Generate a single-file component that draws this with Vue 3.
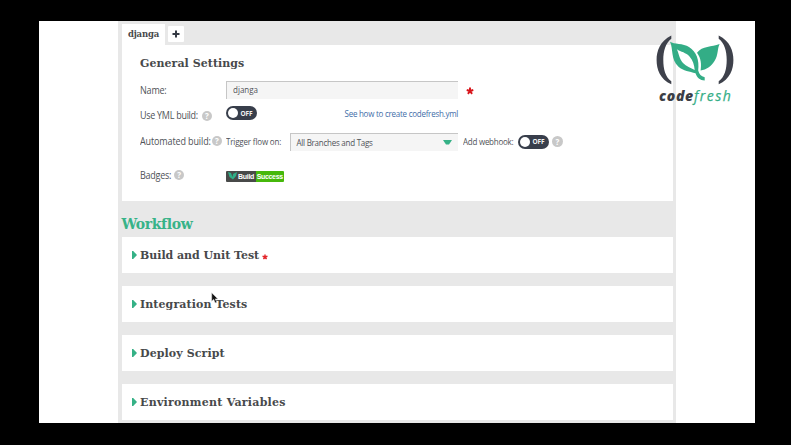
<script setup>
import { h } from 'vue'

const stages = [
  { title: 'Build and Unit Test', required: true },
  { title: 'Integration Tests' },
  { title: 'Deploy Script' },
  { title: 'Environment Variables', wide: true },
]

const Help = () => h('span', { class: 'help' }, '?')
const Toggle = () => h('span', { class: 'toggle' }, [h('i'), h('b', 'OFF')])
</script>

<template>
  <div class="frame">
    <div class="screen">
      <main class="panel">
        <nav class="tabs">
          <div class="tab slab">djanga</div>
          <button class="add" aria-label="Add">
            <svg width="8" height="8" viewBox="0 0 8 8"><path d="M4 .5v7M.5 4h7" stroke="#343a44" stroke-width="2" /></svg>
          </button>
        </nav>

        <section class="card">
          <h2 class="slab">General Settings</h2>
          <div class="row name-row">
            <div class="label"><span class="t-name">Name:</span></div>
            <div class="input"><span class="tall">djanga</span></div>
            <svg class="star big" viewBox="0 0 10 10"><path d="M5 5V.7M5 5L.9 3.8M5 5l4.1-1.2M5 5L2.4 8.6M5 5l2.6 3.6" /></svg>
          </div>
          <div class="row yml-row">
            <div class="label"><span class="t-yml">Use YML build:</span><Help /></div>
            <Toggle />
            <a class="link tall">See how to create codefresh.yml</a>
          </div>
          <div class="row auto-row">
            <div class="label"><span class="t-auto">Automated build:</span><Help /></div>
            <span class="trigger tall">Trigger flow on:</span>
            <div class="select">
              <span class="tall">All Branches and Tags</span>
              <svg width="9" height="5" viewBox="0 0 9 5"><path d="M0 0h9L6 4.400H3z" fill="#35b186" /></svg>
            </div>
            <span class="webhook tall">Add webhook:</span>
            <Toggle />
            <Help />
          </div>
          <div class="row badge-row">
            <div class="label"><span class="t-badges">Badges:</span><Help /></div>
            <div class="badge">
              <span class="build">
                <svg width="9" height="8" viewBox="0 0 9 8"><path d="M0 0l3 1 1.500 4L5 2l4-2-1 4-3 3.500L1.500 5z" fill="#2fae87" /></svg>
                <span>Build</span>
              </span>
              <span class="success">Success</span>
            </div>
          </div>
        </section>

        <h1 class="slab">Workflow</h1>
        <section v-for="s in stages" :key="s.title" class="stage">
          <svg class="caret" width="5" height="8" viewBox="0 0 5 8"><path d="M0 0l1.200 0L5 4 1.200 8H0z" fill="#35b186" /></svg>
          <h3 class="slab" :class="{ wide: s.wide, tight: s.required }">{{ s.title }}</h3>
          <svg v-if="s.required" class="star" viewBox="0 0 10 10"><path d="M5 5V.7M5 5L.9 3.8M5 5l4.1-1.2M5 5L2.4 8.6M5 5l2.6 3.6" /></svg>
        </section>
      </main>

      <div class="logo">
        <svg width="78" height="50" viewBox="0 0 78 50">
          <path d="M15.300 .5C4 6 .6 16 .6 25S4 44.500 15.300 49.300V46.300C9.300 42 7.300 34 7.300 25S9.500 8 15.300 3.700z" fill="#3e414b" />
          <path d="M62.700 .5C74 6 77.400 16 77.400 25S74 44.500 62.700 49.300V46.300C68.700 42 70.700 34 70.700 25S68.500 8 62.700 3.700z" fill="#3e414b" />
          <path fill-rule="evenodd" d="M14 6.800C18 9.500 27 8.200 33 12C40.500 16.800 43.500 25 42.200 35.500C43.200 39.300 45 41.300 48.700 42.300V45.500C44 45.300 41 42.500 39.500 38.200C33.500 36.500 27.500 36 22.500 31.700C14.500 24.500 17.500 14 14 6.800zM20.800 14.300C23 18.500 23 23.500 27 28C30.300 31.700 34.800 33 38.700 34.900C38.200 30 37 25.500 33.500 21.500C30 17.500 25 17 20.800 14.300z" fill="#33ad86" />
          <path d="M63.600 9C61.300 13 62.500 20 58.500 26C55 31.500 50.500 34.500 44.600 35.600C45.500 29.500 45.200 23.500 41 17.800C46.500 10.500 55.500 12.300 63.600 9z" fill="#33ad86" />
        </svg>
        <div class="wordmark"><b>code</b><span>fresh</span></div>
      </div>

      <svg class="cursor" width="8" height="12" viewBox="0 0 8 12"><path d="M.7.8v8.400l2-1.800 1.500 3.500 1.600-.7-1.500-3.300h2.600z" fill="#111" stroke="#ddd" stroke-width=".6" /></svg>
    </div>
  </div>
</template>

<style>
body { background: #000; overflow: hidden; }
</style>

<style scoped>
* { box-sizing: border-box; }
.frame {
  width: 791px;
  height: 445px;
  padding: 21px 36px 22px 39px;
  background: #000;
  font-family: "Open Sans", "Noto Sans", sans-serif;
  color: #505358;
}
.screen {
  position: relative;
  height: 402px;
  overflow: hidden;
  background: #fff;
}
.panel {
  width: 558px;
  height: 402px;
  margin-left: 79px;
  padding: 3px 3px 0 3.500px;
  background: #e8e8e8;
}
h1, h2, h3 { margin: 0; }
.slab {
  font-family: "DejaVu Serif", serif;
  font-weight: 700;
  white-space: nowrap;
  color: #47494b;
}
.tabs { display: flex; height: 21px; }
.tab {
  width: 43px;
  padding-left: 6.500px;
  background: #fff;
  font-size: 8.500px;
  line-height: 21px;
  letter-spacing: -.2px;
}
.add {
  display: grid;
  place-items: center;
  width: 16px;
  height: 16px;
  margin: 2px 0 0 3.500px;
  padding: 0;
  border: 0;
  border-radius: 1px;
  background: #fff;
}
.card {
  height: 156px;
  padding: 8px 0 0 18.500px;
  background: #fff;
}
.card h2 { height: 20px; font-size: 11px; line-height: 22px; letter-spacing: .05px; }
.row { display: flex; align-items: center; white-space: nowrap; font-size: 8px; }
.label { display: flex; align-items: center; width: 86px; flex: none; font-size: 9px; }
.label > span:first-child { transform: scaleY(1.1); }
.tall { display: inline-block; transform: scaleY(1.13); }
.name-row { height: 18px; margin-top: 8px; }
.yml-row { height: 16px; margin-top: 8px; }
.auto-row { height: 18px; margin-top: 9px; }
.badge-row { height: 14px; margin-top: 18px; }
.t-name { letter-spacing: -.2px; }
.t-yml { letter-spacing: -.28px; }
.t-auto { letter-spacing: -.12px; }
.t-badges { letter-spacing: -.25px; }
.yml-row .label { padding-top: 1px; }
.input, .select {
  height: 18px;
  border-top: 1px solid #c6c6c6;
  border-left: 1px solid #c6c6c6;
  background: #f5f5f5;
}
.input { width: 232px; padding-left: 6px; line-height: 16px; }
.star { width: 6px; height: 6px; margin: 3px 0 0 3px; stroke: #e3262b; stroke-width: 2.400; fill: none; }
.star.big { width: 8px; height: 8px; margin: 1px 0 0 8px; stroke: #d8151b; }
:deep(.help) {
  display: block;
  flex: none;
  width: 10px;
  height: 10px;
  margin-left: 4px;
  border-radius: 50%;
  background: #c8c8c8;
  color: #fff;
  font-size: 8px;
  font-weight: 700;
  line-height: 10px;
  text-align: center;
}
.badge-row :deep(.help) { margin-left: 3px; }
:deep(.toggle) {
  display: flex;
  align-items: center;
  flex: none;
  width: 31px;
  height: 14px;
  margin-top: -4px;
  padding-left: 2px;
  border-radius: 7px;
  background: #383e4b;
  color: #f2f2f2;
}
:deep(.toggle i) { width: 10px; height: 10px; border-radius: 50%; background: #fff; }
:deep(.toggle b) { margin-left: 2.500px; font-size: 6.500px; line-height: 15px; letter-spacing: -.15px; }
.link { margin: -3px 0 0 87.500px; color: #3f6da8; letter-spacing: -.25px; }
.trigger { width: 63.500px; flex: none; letter-spacing: -.17px; }
.select {
  display: flex;
  align-items: center;
  justify-content: space-between;
  flex: none;
  width: 168px;
  margin-top: 2px;
  padding: 0 6px 0 6px;
  letter-spacing: -.25px;
}
.webhook { width: 55px; flex: none; margin-left: 5.500px; letter-spacing: -.25px; }
.auto-row :deep(.toggle) { margin-top: 1px; }
.auto-row > :deep(.help) { width: 11px; height: 11px; line-height: 11px; margin-left: 3px; }
.auto-row .label :deep(.help) { margin-left: 1px; }
.badge {
  display: flex;
  width: 58px;
  height: 11px;
  margin-top: 2px;
  border-radius: 1px;
  overflow: hidden;
  color: #fff;
  font: 700 7px/11px "Liberation Sans", sans-serif;
}
.build { display: flex; align-items: center; gap: 1px; width: 29.500px; padding-left: 2px; background: #484a49; letter-spacing: -.3px; }
.success { flex: 1; background: #46b80b; text-align: center; letter-spacing: -.35px; }
h1.slab {
  height: 36px;
  padding-top: 12px;
  font-size: 14px;
  line-height: 22px;
  letter-spacing: -.35px;
  color: #37b388;
}
.stage {
  display: flex;
  align-items: center;
  height: 36px;
  margin-bottom: 13px;
  padding-left: 10px;
  background: #fff;
}
.stage h3 { margin-left: 3.500px; padding-top: 2px; font-size: 11px; line-height: 20px; letter-spacing: .1px; }
.stage h3.tight { letter-spacing: -.03px; }
.stage h3.wide { letter-spacing: .25px; }
.logo { position: absolute; left: 617px; top: 14px; width: 84px; }
.logo svg { display: block; }
.wordmark {
  margin: 1px 0 0 3px;
  font-size: 14px;
  font-style: italic;
  line-height: 20px;
  white-space: nowrap;
  color: #3b3e46;
}
.wordmark b { font-weight: 800; letter-spacing: .7px; }
.wordmark span { color: #35ae87; letter-spacing: 1.500px; -webkit-text-stroke: .25px #35ae87; }
.cursor { position: absolute; left: 172px; top: 271px; }
</style>
